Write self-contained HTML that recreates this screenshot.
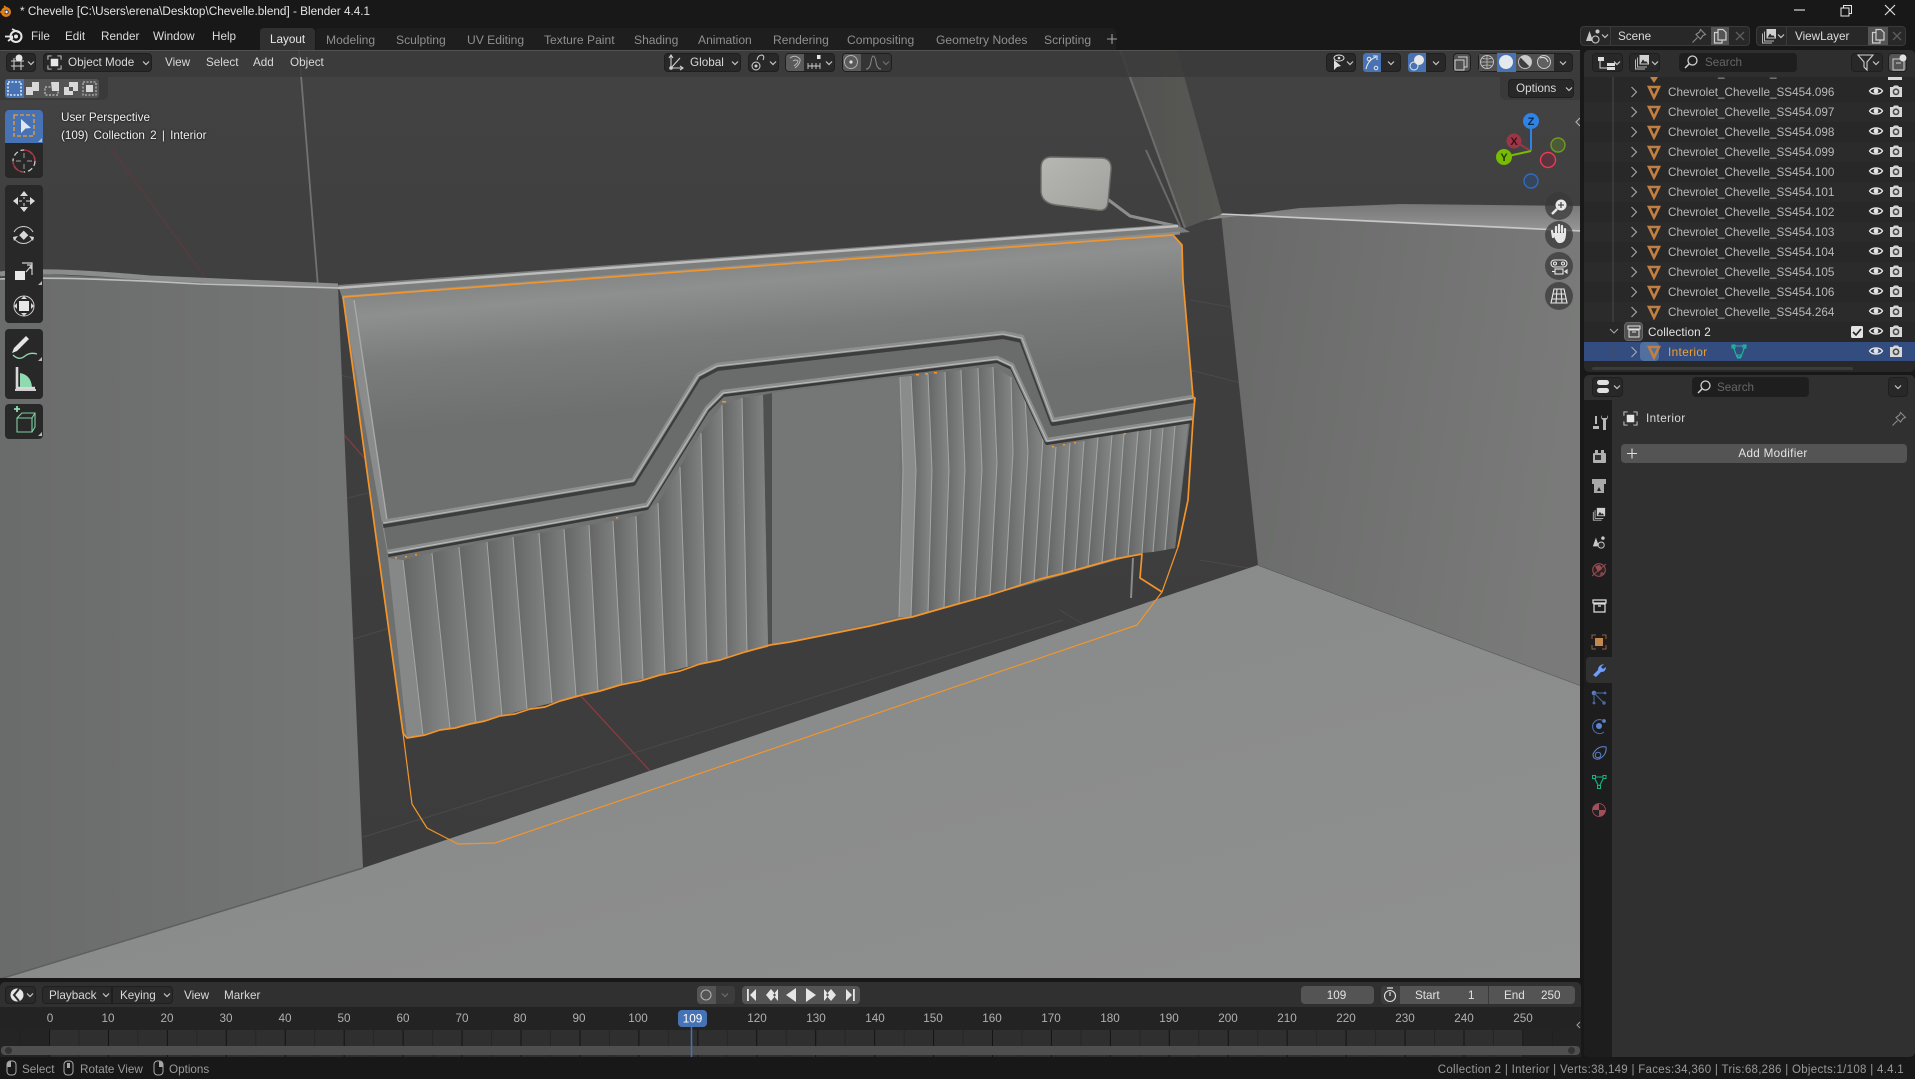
<!DOCTYPE html>
<html><head><meta charset="utf-8"><title>Blender</title>
<style>
html,body{margin:0;padding:0;background:#181818;width:1915px;height:1079px;overflow:hidden}
body{position:relative;font-family:"Liberation Sans",sans-serif;font-size:11.7px;color:#c4c4c4}
.t{position:absolute;line-height:16px;white-space:nowrap;margin-top:1px}
.tab{font-size:12.1px}
.b{position:absolute;box-sizing:border-box}
.btn{position:absolute;box-sizing:border-box;background:#282828;border:1px solid #1f1f1f;border-radius:4px}
svg{position:absolute;left:0;top:0;overflow:visible}
</style></head><body>
<svg width="0" height="0" style="position:absolute">
<defs>
<symbol id="tri" viewBox="0 0 16 16"><path d="M3 3H13L8 13.5Z" fill="none" stroke="#c27f41" stroke-width="2.6"/></symbol>
<symbol id="eye" viewBox="0 0 16 16"><path d="M1.5 8C4 4 12 4 14.500 8C12 12 4 12 1.500 8Z" fill="none" stroke="#e4e4e4" stroke-width="1.400"/><circle cx="8" cy="8" r="2.400" fill="#e4e4e4"/></symbol>
<symbol id="cam" viewBox="0 0 16 16"><path d="M2 4H5L6 2.500H10L11 4H14V14H2Z" fill="#d8d8d8"/><circle cx="8" cy="8.800" r="3.400" fill="#4a4a4a"/><circle cx="8" cy="8.800" r="1.800" fill="#d8d8d8"/></symbol>
<symbol id="chev" viewBox="0 0 8 8"><path d="M1 2.500L4 5.500L7 2.500" fill="none" stroke="#c8c8c8" stroke-width="1.200"/></symbol>
<symbol id="arr" viewBox="0 0 8 12"><path d="M1.500 1L6.500 6L1.500 11" fill="none" stroke="#a8a8a8" stroke-width="1.100"/></symbol>
<symbol id="copy" viewBox="0 0 16 16"><path d="M6 1.500H11L14 4.500V12H6ZM6 4.500H2.500V15H10V12" fill="none" stroke="#cfcfcf" stroke-width="1.200"/></symbol>
<symbol id="x" viewBox="0 0 16 16"><path d="M4 4L12 12M12 4L4 12" stroke="#5e5e5e" stroke-width="1.300"/></symbol>
<symbol id="search" viewBox="0 0 16 16"><circle cx="9.500" cy="6.500" r="4.500" fill="none" stroke="#d0d0d0" stroke-width="1.300"/><path d="M6.200 9.800L2 14" stroke="#d0d0d0" stroke-width="1.500"/></symbol>
<symbol id="pin" viewBox="0 0 16 16"><path d="M9.500 1.500L14.500 6.500L12 7.500L9.500 11L5 6.500L8.500 4ZM6.500 9.500L1.500 14.500" fill="none" stroke="#8a8a8a" stroke-width="1.100"/></symbol>
<symbol id="objbox" viewBox="0 0 16 16"><path d="M1 5V1H5M11 1H15V5M15 11V15H11M5 15H1V11" fill="none" stroke="#d0d0d0" stroke-width="1"/><rect x="4" y="4" width="8" height="8" fill="#e6e6e6"/></symbol>
<symbol id="vl" viewBox="0 0 16 16"><rect x="5.500" y="1" width="9.500" height="9.500" fill="#d0d0d0"/><path d="M6.500 9.500L9 5.500L11 8L12 7L14 9.500Z" fill="#2a2a2a"/><path d="M3.500 3.500V13H13M1.500 5.500V15H11" fill="none" stroke="#b8b8b8" stroke-width="1"/></symbol>
<symbol id="scn" viewBox="0 0 16 16"><path d="M1 13L4.500 3L8 13Z" fill="#c8c8c8"/><circle cx="12.500" cy="3.500" r="2" fill="#c8c8c8"/><circle cx="10.500" cy="11.500" r="3.500" fill="#2a2a2a" stroke="#c8c8c8" stroke-width="1.100"/></symbol>
</defs>
</svg>

<!-- SCENE -->
<svg width="1582" height="979" viewBox="0 0 1582 979" style="left:0;top:0">
<defs>
<linearGradient id="bgG" x1="0" y1="0" x2="0" y2="1"><stop offset="0" stop-color="#434343"/><stop offset=".4" stop-color="#3e3e3e"/><stop offset="1" stop-color="#3c3c3c"/></linearGradient>
<linearGradient id="lw" x1="0" y1="0" x2="1" y2="0"><stop offset="0" stop-color="#6a6b6b"/><stop offset="1" stop-color="#757676"/></linearGradient>
<linearGradient id="rw" x1="0" y1="0" x2="1" y2="0.2"><stop offset="0" stop-color="#686968"/><stop offset="1" stop-color="#797a79"/></linearGradient>
<linearGradient id="fl" x1="0" y1="0" x2="1" y2="1"><stop offset="0" stop-color="#868787"/><stop offset="1" stop-color="#8f9090"/></linearGradient>
<linearGradient id="door" gradientUnits="userSpaceOnUse" x1="700" y1="268" x2="712" y2="405"><stop offset="0" stop-color="#858686"/><stop offset=".14" stop-color="#8e8f8f"/><stop offset=".5" stop-color="#7a7b7b"/><stop offset="1" stop-color="#6e6f6f"/></linearGradient>
<linearGradient id="pl" x1="0" y1="0" x2="1" y2="0"><stop offset="0" stop-color="#646565"/><stop offset=".8" stop-color="#7f8080"/><stop offset="1" stop-color="#848585"/></linearGradient>
<linearGradient id="sill" x1="0" y1="0" x2="0" y2="1"><stop offset="0" stop-color="#777"/><stop offset=".7" stop-color="#8d8d8d"/><stop offset="1" stop-color="#999"/></linearGradient>
<linearGradient id="pillar" x1="0" y1="0" x2="1" y2="0"><stop offset="0" stop-color="#525250"/><stop offset="1" stop-color="#585855"/></linearGradient>
<linearGradient id="mir" x1="0" y1="0" x2="1" y2="1"><stop offset="0" stop-color="#b6b7b3"/><stop offset="1" stop-color="#a0a19c"/></linearGradient>
</defs>
<rect width="1582" height="979" fill="url(#bgG)"/>
<g stroke="#4a4a4a" stroke-width="1" fill="none">
<path d="M363 837L1063 620M340 375L1030 540M1190 370L1580 470M1190 300L1260 312M1200 560L1260 570"/>
<path d="M340 500L380 490M350 640L400 625M1060 610L1150 665"/>
</g>
<path d="M340 430L366 460M581 696L651 772" stroke="#8a3a42" stroke-width="1.300" fill="none"/>
<path d="M110 147L208 281" stroke="#5a3a3e" stroke-width="1.300"/>
<path d="M299 50L318 287" stroke="#727272" stroke-width="1.800"/>
<!-- left wall -->
<polygon points="0,278 40,274 200,282 338,287 363,868 0,979" fill="url(#lw)"/>
<path d="M0 274Q40 268 150 278L338 286" stroke="#8b8c8c" stroke-width="5" fill="none"/>
<path d="M0 279Q60 276 200 284L338 288" stroke="#bdbdbd" stroke-width="1.600" fill="none"/>
<!-- floor -->
<polygon points="0,979 363,868 1258,565 1582,686 1582,979" fill="url(#fl)"/>
<path d="M0 979L363 868" stroke="#5e5e5e" stroke-width="1.500"/>
<path d="M1258 565L1582 686" stroke="#555" stroke-width="1.200"/>
<!-- right wall -->
<polygon points="1221,214 1582,232 1582,686 1258,565" fill="url(#rw)"/>
<polygon points="1190,222 1300,208 1400,204 1582,206 1582,232 1221,215" fill="url(#sill)"/>
<path d="M1205 217L1221 214L1582 231" stroke="#c8c8c8" stroke-width="1.600" fill="none"/>
<!-- pillar -->
<polygon points="1120,50 1177,50 1222,214 1185,228" fill="url(#pillar)"/>
<path d="M1120 50L1185 228" stroke="#6d6d6b" stroke-width="2"/>
<path d="M1146 150L1180 226" stroke="#6a6a68" stroke-width="2"/>
<!-- mirror -->
<path d="M1106 198L1130 216L1176 226" stroke="#8e8e8e" stroke-width="3" fill="none"/>
<path d="M1052 157L1102 158Q1112 159 1111 170L1108 202Q1107 212 1097 210L1056 205Q1042 203 1041 192L1041 168Q1041 157 1052 157Z" fill="url(#mir)" stroke="#6c6d69" stroke-width="1.400"/>
<!-- rail -->
<polygon points="338,285 1176,224 1190,232 344,304" fill="#7c7d7d"/>
<path d="M338 288L1178 226" stroke="#bcbcbc" stroke-width="2.400"/>
<path d="M342 297L1180 233" stroke="#8d8e8e" stroke-width="3"/>
<!-- notch area -->
<path d="M1133 558L1131 598" stroke="#8a8a8a" stroke-width="2" fill="none"/>
<!-- door upper -->
<polygon points="343,297 1173,235 1182,245 1183,280 1193,397 1195,398 1193,420 1188,423 1175,548 1142,553 912,617 772,645 407,738 403,733" fill="url(#door)"/>
<polygon points="343,297 354,300 393,558 388,558" fill="#8a8b8b"/>
<path d="M354 300L393 560" stroke="#a7a8a8" stroke-width="1.400" fill="none"/>
<!-- channel between trims -->
<polygon points="383,522 633,480 698,375 717,365 1003,333 1022,337 1053,420 1193,397 1192,418 1047,440 1012,365 997,358 723,392 707,408 647,505 388,552" fill="#6a6b6b"/>
<!-- lower panel base -->
<polygon points="388,556 647,508 707,410 723,394 997,360 1012,367 1047,443 1190,421 1175,548 1142,553 912,617 772,645 407,738" fill="#717272"/>
<!-- plain panel -->
<polygon points="772,393 900,377 899,617 772,645" fill="#757676"/>
<polygon points="763,395 772,393 772,645 768,647" fill="#4e4f4f"/>
<polygon points="900,377 911,376 916,470 911,617 899,617 903,470" fill="#8a8b8b"/>
<!-- left pleats -->
<polygon points="388,558 403,560 423,735 407,738" fill="#868787"/>
<g fill="url(#pl)">
<polygon points="403,560 432,553 450,728 423,735"/>
<polygon points="432,553 459,547 476,723 450,728"/>
<polygon points="459,547 487,542 502,716 476,723"/>
<polygon points="487,542 513,537 527,709 502,716"/>
<polygon points="513,537 539,533 552,703 527,709"/>
<polygon points="539,533 564,529 576,696 552,703"/>
<polygon points="564,529 589,525 598,691 576,696"/>
<polygon points="589,525 613,521 622,684 598,691"/>
<polygon points="613,521 636,516 643,679 622,684"/>
<polygon points="636,516 658,503 665,673 643,679"/>
<polygon points="658,503 680,467 687,667 665,673"/>
<polygon points="680,467 701,433 707,662 687,667"/>
<polygon points="701,433 722,405 727,658 707,662"/>
<polygon points="722,405 742,398 747,652 727,658"/>
<polygon points="742,398 763,395 768,647 747,652"/>
<polygon points="911,376 928,374 932,470 928,613 911,617 916,470"/>
<polygon points="928,374 945,372 949,470 944,608 928,613 932,470"/>
<polygon points="945,372 961,370 965,470 959,603 944,608 949,470"/>
<polygon points="961,370 978,368 982,470 975,598 959,603 965,470"/>
<polygon points="978,368 993,367 997,463 990,595 975,598 982,470"/>
<polygon points="993,367 1011,377 1013,453 1005,590 990,595 997,463"/>
<polygon points="1011,377 1025,397 1028,453 1020,586 1005,590 1013,453"/>
<polygon points="1025,397 1043,438 1034,582 1020,586 1028,453"/>
<polygon points="1043,438 1056,447 1047,577 1034,582"/>
<polygon points="1056,447 1070,443 1062,574 1047,577"/>
<polygon points="1070,443 1084,441 1075,571 1062,574"/>
<polygon points="1084,441 1098,437 1088,567 1075,571"/>
<polygon points="1098,437 1112,435 1102,563 1088,567"/>
<polygon points="1112,435 1124,433 1115,559 1102,563"/>
<polygon points="1124,433 1138,431 1128,557 1115,559"/>
<polygon points="1138,431 1151,429 1142,553 1128,557"/>
<polygon points="1151,429 1163,428 1153,552 1142,553"/>
<polygon points="1163,428 1175,426 1165,550 1153,552"/>
<polygon points="1175,426 1188,423 1175,548 1165,550"/>
</g>
<g stroke="#a4a5a5" stroke-width="1" fill="none">
<path d="M403 560L423 735M432 553L450 728M459 547L476 723M487 542L502 716M513 537L527 709M539 533L552 703M564 529L576 696M589 525L598 691M613 521L622 684M636 516L643 679M658 503L665 673M680 467L687 667M701 433L707 662M722 405L727 658M742 398L747 652"/>
<path d="M900 377L903 470L899 617M911 376L916 470L911 617M928 374L932 470L928 613M945 372L949 470L944 608M961 370L965 470L959 603M978 368L982 470L975 598M993 367L997 463L990 595M1011 377L1013 453L1005 590M1025 397L1028 453L1020 586M1043 438L1034 582"/>
<path d="M1056 447L1047 577M1070 443L1062 574M1084 441L1075 571M1098 437L1088 567M1112 435L1102 563M1124 433L1115 559M1138 431L1128 557M1151 429L1142 553M1163 428L1153 552M1175 426L1165 550"/>
</g>
<!-- trims -->
<g fill="none" stroke-linejoin="round">
<path d="M383 525L633 483L698 378L717 368L1003 336L1022 340L1053 423L1193 400" stroke="#3d3d3d" stroke-width="6"/>
<path d="M383 522L633 480L698 375L717 365L1003 333L1022 337L1053 420L1193 397" stroke="#8c8d8d" stroke-width="4.500"/>
<path d="M383 523L633 481L698 376L717 366L1003 334L1022 338L1053 421L1193 398" stroke="#b8b9b9" stroke-width="1"/>
<path d="M388 555L647 508L707 411L723 395L997 361L1012 368L1047 443L1192 421" stroke="#383838" stroke-width="4"/>
<path d="M388 552L647 505L707 408L723 392L997 358L1012 365L1047 440L1192 418" stroke="#8c8d8d" stroke-width="4.500"/>
<path d="M388 553L647 506L707 409L723 393L997 359L1012 366L1047 441L1192 419" stroke="#bdbebe" stroke-width="1"/>
</g>
<!-- orange outline -->
<g fill="none" stroke="#f3952a" stroke-linejoin="round">
<path d="M343 297L1173 235L1182 245L1183 280L1193 397L1195 398L1193 420L1188 500L1178 547" stroke-width="1.700"/>
<path d="M343 297L403 733L407 738L425 735L440 730L455 728L470 724L485 721L500 716L515 714L530 709L545 707L560 701L582 695L600 691L620 685L640 681L660 675L680 671L700 664L720 660L745 652L770 645L790 642L810 638L840 632L870 626L900 619L912 617L940 609L965 602L990 595L1015 587L1040 579L1065 573L1090 566L1115 559L1142 554L1140 578L1162 592" stroke-width="1.700"/>
<path d="M1178 547L1162 592L1137 625L495 843L458 844L427 828L412 804L403 733" stroke-width="1.200"/>
</g>
<g fill="#f3952a"><rect x="395" y="557" width="2" height="1.500"/><rect x="405" y="556" width="2" height="1.500"/><rect x="415" y="554" width="2" height="1.500"/><rect x="616" y="517" width="2" height="1.500"/><rect x="722" y="401" width="4" height="1.500"/><rect x="916" y="374" width="3" height="1.500"/><rect x="925" y="373" width="3" height="1.500"/><rect x="934" y="372" width="3" height="1.500"/><rect x="1052" y="446" width="2" height="1.500"/><rect x="1063" y="444" width="2" height="1.500"/><rect x="1074" y="442" width="2" height="1.500"/><rect x="1124" y="433" width="2" height="1.500"/></g>
<!-- gizmo -->
<path d="M1531 151V121" stroke="#2f83e6" stroke-width="2"/>
<path d="M1531 151L1514 141" stroke="#9c3647" stroke-width="2"/>
<path d="M1531 151L1504 157" stroke="#78bb00" stroke-width="2"/>
<circle cx="1558" cy="145" r="7" fill="#4c5a35" stroke="#6f9a22" stroke-width="1.400"/>
<circle cx="1548" cy="160" r="7.500" fill="#59333d" stroke="#ed3a55" stroke-width="1.400"/>
<circle cx="1531" cy="181" r="7" fill="#35465f" stroke="#2f6cc0" stroke-width="1.400"/>
<circle cx="1514" cy="141" r="7.500" fill="#9c3647"/>
<circle cx="1531" cy="121" r="8" fill="#2f83e6"/>
<circle cx="1504" cy="157" r="8" fill="#78bb00"/>
<text x="1531" y="125" font-family="Liberation Sans" font-size="11" font-weight="bold" fill="#0e2a4a" text-anchor="middle">Z</text>
<text x="1514" y="145" font-family="Liberation Sans" font-size="11" font-weight="bold" fill="#3d0f18" text-anchor="middle">X</text>
<text x="1504" y="161" font-family="Liberation Sans" font-size="11" font-weight="bold" fill="#22380a" text-anchor="middle">Y</text>
<!-- nav -->
<g fill="#3a3a3a" fill-opacity=".75"><circle cx="1559" cy="206" r="14"/><circle cx="1559" cy="235" r="14"/><circle cx="1559" cy="266" r="14"/><circle cx="1559" cy="296" r="14"/></g>
<circle cx="1561" cy="205" r="5.500" fill="#e8e8e8"/><path d="M1557 209L1552 214" stroke="#e8e8e8" stroke-width="2.500"/><path d="M1558 205H1564M1561 202V208" stroke="#333" stroke-width="1.100"/>
<path d="M1553 237L1552 231M1556 233V227M1559 232V225M1562 232V226M1565 234V229" stroke="#e8e8e8" stroke-width="2.200" stroke-linecap="round"/><path d="M1553 233Q1556 244 1560 243Q1566 243 1566 233L1553 233Z" fill="#e8e8e8"/>
<g fill="none" stroke="#e8e8e8" stroke-width="1.100"><rect x="1551" y="260" width="16" height="7" rx="3.500"/><circle cx="1555" cy="263.500" r="1.500"/><circle cx="1563" cy="263.500" r="1.500"/><rect x="1555" y="269" width="8" height="5"/><path d="M1565 271.500L1567 270V273Z"/><path d="M1552 271.500H1555"/></g>
<g fill="none" stroke="#e8e8e8" stroke-width="1.100"><path d="M1554 289H1564L1567 303H1551ZM1552.500 294H1565.500M1552 299H1566M1557 289L1556 303M1561 289L1562 303"/></g>
<path d="M1580 118L1576 122L1580 126" stroke="#b0b0b0" stroke-width="1.200" fill="none"/>
</svg>

<!-- viewport header shade -->
<div class="b" style="left:0;top:50px;width:1580px;height:27px;background:#3a3a3a;opacity:.85;border-top:1px solid #555"></div>
<div class="b" style="left:0;top:77px;width:108px;height:23px;background:#3a3a3a;border-radius:0 0 5px 0;opacity:.9"></div>
<div class="b" style="left:1500px;top:77px;width:80px;height:23px;background:#3a3a3a;border-radius:0 0 0 5px;opacity:.9"></div>
<div class="b" style="left:1580px;top:50px;width:4px;height:932px;background:#181818"></div>
<div class="b" style="left:0;top:978px;width:1584px;height:4px;background:#181818"></div>

<!-- Top bars -->
<div class="b" style="left:0;top:0;width:1915px;height:50px;background:#181818"></div>
<svg width="14" height="14" viewBox="0 0 14 14" style="left:0;top:4px"><circle cx="6" cy="8" r="5" fill="#e87d0d"/><circle cx="6.500" cy="8" r="2.400" fill="#265787"/><circle cx="6.500" cy="8" r="1.200" fill="#fff"/><path d="M0 8H6M4 2L9 6" stroke="#e87d0d" stroke-width="1.600"/></svg>
<div class="t" style="left:20px;top:3px;font-size:11.75px;color:#e4e4e4">* Chevelle [C:\Users\erena\Desktop\Chevelle.blend] - Blender 4.4.1</div>
<svg width="1915" height="20" viewBox="0 0 1915 20" style="left:0;top:0"><path d="M1794 10H1805" stroke="#e8e8e8" stroke-width="1.100"/><path d="M1841 8H1849V16H1841ZM1843.500 8V5.500H1851.500V13.500H1849" fill="none" stroke="#e8e8e8" stroke-width="1"/><path d="M1885 5L1895 15M1895 5L1885 15" stroke="#e8e8e8" stroke-width="1.100"/></svg>
<svg width="20" height="20" viewBox="0 0 20 20" style="left:5px;top:26px"><circle cx="11" cy="10.500" r="5.500" fill="none" stroke="#e6e6e6" stroke-width="2"/><circle cx="11" cy="10.500" r="2" fill="#e6e6e6"/><path d="M0 10.500H8M3 15L8 11.500M7 3L14 6.500" stroke="#e6e6e6" stroke-width="1.800"/></svg>
<div class="t" style="left:31px;top:28px;color:#dcdcdc">File</div>
<div class="t" style="left:65px;top:28px;color:#dcdcdc">Edit</div>
<div class="t" style="left:101px;top:28px;color:#dcdcdc">Render</div>
<div class="t" style="left:153px;top:28px;color:#dcdcdc">Window</div>
<div class="t" style="left:212px;top:28px;color:#dcdcdc">Help</div>
<!-- tabs -->
<div class="b" style="left:260px;top:28px;width:55px;height:22px;background:#303030;border-radius:4px 4px 0 0"></div>
<div class="b" style="left:316px;top:28px;width:800px;height:22px;background:#1e1e1e;border-radius:4px 4px 0 0"></div>
<div class="t" style="left:270px;top:31px;color:#e8e8e8">Layout</div>
<div class="t tab" style="left:326px;top:31px;color:#8f8f8f">Modeling</div>
<div class="t tab" style="left:396px;top:31px;color:#8f8f8f">Sculpting</div>
<div class="t tab" style="left:467px;top:31px;color:#8f8f8f">UV Editing</div>
<div class="t tab" style="left:544px;top:31px;color:#8f8f8f">Texture Paint</div>
<div class="t tab" style="left:634px;top:31px;color:#8f8f8f">Shading</div>
<div class="t tab" style="left:698px;top:31px;color:#8f8f8f">Animation</div>
<div class="t tab" style="left:773px;top:31px;color:#8f8f8f">Rendering</div>
<div class="t tab" style="left:847px;top:31px;color:#8f8f8f">Compositing</div>
<div class="t tab" style="left:936px;top:31px;color:#8f8f8f">Geometry Nodes</div>
<div class="t tab" style="left:1044px;top:31px;color:#8f8f8f">Scripting</div>
<svg width="12" height="12" viewBox="0 0 12 12" style="left:1106px;top:33px"><path d="M6 1V11M1 6H11" stroke="#a0a0a0" stroke-width="1.100"/></svg>
<!-- scene / viewlayer -->
<div class="btn" style="left:1580px;top:26px;width:170px;height:20px;background:#282828;border-color:#3a3a3a"></div>
<div class="b" style="left:1610px;top:27px;width:1px;height:18px;background:#3a3a3a"></div>
<div class="b" style="left:1711px;top:27px;width:18px;height:18px;background:#545454"></div>
<div class="t" style="left:1618px;top:28px;color:#dcdcdc">Scene</div>
<div class="btn" style="left:1756px;top:26px;width:150px;height:20px;background:#282828;border-color:#3a3a3a"></div>
<div class="b" style="left:1786px;top:27px;width:1px;height:18px;background:#3a3a3a"></div>
<div class="b" style="left:1868px;top:27px;width:20px;height:18px;background:#545454"></div>
<div class="t" style="left:1795px;top:28px;color:#dcdcdc">ViewLayer</div>
<svg width="1915" height="50" viewBox="0 0 1915 50" style="left:0;top:0">
<use href="#scn" x="1585" y="28" width="16" height="16"/><use href="#chev" x="1601" y="32" width="8" height="8"/>
<use href="#pin" x="1691" y="28" width="16" height="16"/><use href="#copy" x="1712" y="28" width="16" height="16"/><use href="#x" x="1732" y="28" width="16" height="16"/>
<use href="#vl" x="1761" y="28" width="16" height="16"/><use href="#chev" x="1777" y="32" width="8" height="8"/>
<use href="#copy" x="1870" y="28" width="16" height="16"/><use href="#x" x="1889" y="28" width="16" height="16"/>
</svg>

<!-- Viewport header widgets -->
<div class="btn" style="left:6px;top:53px;width:30px;height:19px"></div>
<div class="btn" style="left:43px;top:53px;width:109px;height:19px"></div>
<div class="t" style="left:68px;top:54px;color:#d8d8d8">Object Mode</div>
<div class="t" style="left:165px;top:54px;color:#d8d8d8">View</div>
<div class="t" style="left:206px;top:54px;color:#d8d8d8">Select</div>
<div class="t" style="left:253px;top:54px;color:#d8d8d8">Add</div>
<div class="t" style="left:290px;top:54px;color:#d8d8d8">Object</div>
<div class="btn" style="left:664px;top:53px;width:77px;height:19px"></div>
<div class="t" style="left:690px;top:54px;color:#d8d8d8">Global</div>
<div class="btn" style="left:748px;top:53px;width:31px;height:19px"></div>
<div class="btn" style="left:785px;top:53px;width:50px;height:19px"></div>
<div class="b" style="left:786px;top:54px;width:18px;height:17px;background:#5a5a5a;border-radius:3px 0 0 3px"></div>
<div class="btn" style="left:842px;top:53px;width:50px;height:19px;background:#343434"></div>
<div class="b" style="left:843px;top:54px;width:18px;height:17px;background:#5a5a5a;border-radius:3px 0 0 3px"></div>
<div class="btn" style="left:1326px;top:53px;width:30px;height:19px"></div>
<div class="btn" style="left:1363px;top:53px;width:38px;height:19px"></div>
<div class="b" style="left:1363px;top:53px;width:18px;height:19px;background:#4772b3;border-radius:3px 0 0 3px"></div>
<div class="btn" style="left:1408px;top:53px;width:38px;height:19px"></div>
<div class="b" style="left:1408px;top:53px;width:18px;height:19px;background:#4772b3;border-radius:3px 0 0 3px"></div>
<div class="btn" style="left:1453px;top:53px;width:18px;height:19px;background:#505050"></div>
<div class="btn" style="left:1478px;top:53px;width:95px;height:19px"></div>
<div class="b" style="left:1479px;top:54px;width:18px;height:17px;background:#505050"></div>
<div class="b" style="left:1497px;top:53px;width:19px;height:19px;background:#4772b3"></div>
<div class="b" style="left:1516px;top:54px;width:38px;height:17px;background:#505050"></div>
<div class="btn" style="left:1508px;top:79px;width:66px;height:19px"></div>
<div class="t" style="left:1516px;top:80px;color:#d8d8d8">Options</div>
<svg width="1915" height="110" viewBox="0 0 1915 110" style="left:0;top:0">
<path d="M11 61H24M11 66H24M14 58V70M21 58V70" stroke="#d0d0d0" stroke-width="1" fill="none"/><circle cx="19" cy="58" r="3.500" fill="#e4e4e4"/>
<use href="#chev" x="27" y="59" width="8" height="8"/>
<use href="#objbox" x="47" y="55" width="15" height="15"/><use href="#chev" x="142" y="59" width="8" height="8"/>
<path d="M671 56V68H682M671 68L680 58M669 58L671 55L673 58M680 66L683 68L680 70" stroke="#d0d0d0" stroke-width="1.100" fill="none"/><circle cx="671" cy="68" r="1.800" fill="#d0d0d0"/>
<use href="#chev" x="731" y="59" width="8" height="8"/>
<circle cx="756" cy="66" r="4" fill="none" stroke="#d0d0d0"/><circle cx="756" cy="66" r="1.500" fill="#d0d0d0"/><path d="M757 60Q758 55 762 55Q765 56 763 60" fill="none" stroke="#d0d0d0"/>
<use href="#chev" x="769" y="59" width="8" height="8"/>
<path d="M790 58Q795 54 800 59Q801 63 795 68M793 61Q796 59 798 61Q798 63 794 66" fill="none" stroke="#b8b8b8" stroke-width="1"/>
<path d="M808 66H820M808 63V69M812 63V69M816 63V69M820 63V69" stroke="#d0d0d0" stroke-width=".9"/><rect x="817" y="55" width="3.500" height="4" fill="#e8e8e8"/>
<use href="#chev" x="825" y="59" width="8" height="8"/>
<circle cx="851" cy="62" r="6.500" fill="none" stroke="#b0b0b0"/><circle cx="851" cy="62" r="1.600" fill="#e0e0e0"/>
<path d="M866 69Q870 69 871 62Q872 56 873 56Q875 56 876 62Q877 69 881 69" fill="none" stroke="#888" stroke-width="1"/>
<use href="#chev" x="882" y="59" width="8" height="8" opacity=".4"/>
<path d="M1334 60L1334 70L1337 67L1341 66Z" fill="#e0e0e0"/><ellipse cx="1339" cy="58" rx="5" ry="3" fill="none" stroke="#e0e0e0"/><circle cx="1339" cy="58" r="1.300" fill="#e0e0e0"/><use href="#chev" x="1346" y="59" width="8" height="8"/>
<path d="M1366 69Q1368 60 1376 57M1373 56H1377V60" fill="none" stroke="#e6e6e6" stroke-width="1.100"/><circle cx="1369" cy="59" r="1.800" fill="none" stroke="#e6e6e6"/><circle cx="1376" cy="68" r="1.800" fill="none" stroke="#e6e6e6"/><use href="#chev" x="1387" y="59" width="8" height="8"/>
<circle cx="1419" cy="60" r="5" fill="#e8e8e8"/><circle cx="1414" cy="66" r="4" fill="none" stroke="#e8e8e8"/><use href="#chev" x="1432" y="59" width="8" height="8"/>
<path d="M1458 57H1467V67H1464M1455 60H1464V70H1455Z" fill="none" stroke="#d0d0d0"/>
<circle cx="1487" cy="62" r="6.500" fill="none" stroke="#c0c0c0"/><path d="M1480.500 62H1493.500M1487 55.500V68.500M1482 58Q1487 60 1492 58M1482 66Q1487 64 1492 66" fill="none" stroke="#c0c0c0" stroke-width=".8"/>
<circle cx="1506" cy="62" r="7" fill="#e4e8ef"/>
<circle cx="1525" cy="62" r="6.500" fill="#3e3e3e" stroke="#c0c0c0"/><path d="M1525 55.500A6.500 6.500 0 0 1 1525 68.500Z" fill="#cacaca" transform="rotate(-45 1525 62)"/>
<circle cx="1544" cy="62" r="6.500" fill="#606060" stroke="#c8c8c8"/><path d="M1540 58Q1546 56 1548 62" stroke="#e0e0e0" fill="none"/>
<use href="#chev" x="1559" y="59" width="8" height="8"/>
<use href="#chev" x="1565" y="85" width="8" height="8"/>
</svg>
<!-- select mode -->
<div class="b" style="left:5px;top:79px;width:94px;height:19px;background:#545454;border-radius:3px"></div>
<div class="b" style="left:5px;top:79px;width:19px;height:19px;background:#4772b3;border-radius:3px 0 0 3px"></div>
<svg width="110" height="100" viewBox="0 0 110 100" style="left:0;top:0">
<rect x="8" y="82" width="13" height="13" fill="none" stroke="#fff" stroke-width="1.300" stroke-dasharray="2 1.500"/>
<path d="M26 87H32V82H39V91H33V95H26Z" fill="#d8d8d8"/>
<path d="M51 82H59V91H52Z" fill="#d8d8d8"/><rect x="45" y="87" width="13" height="8" fill="none" stroke="#ddd" stroke-dasharray="2 1.500"/>
<path d="M64 87H69V82H78V91H73V95H64ZM69 87V91H73V87Z" fill="#d8d8d8" fill-rule="evenodd"/>
<rect x="83" y="82" width="13" height="13" fill="none" stroke="#ccc" stroke-dasharray="2 1.500"/><rect x="86" y="85" width="7" height="7" fill="#d8d8d8"/>
</svg>
<!-- overlay text -->
<div class="t" style="left:61px;top:109px;color:#f0f0f0;text-shadow:0 0 2px #000">User Perspective</div>
<div class="t" style="left:61px;top:127px;color:#f0f0f0;text-shadow:0 0 2px #000;word-spacing:2px">(109) Collection 2 | Interior</div>
<!-- toolbar -->
<div class="b" style="left:5px;top:110px;width:38px;height:68px;background:#282828;border-radius:4px"></div>
<div class="b" style="left:5px;top:110px;width:38px;height:33px;background:#4772b3;border-radius:4px 4px 0 0"></div>
<div class="b" style="left:5px;top:185px;width:38px;height:138px;background:#282828;border-radius:4px"></div>
<div class="b" style="left:5px;top:329px;width:38px;height:70px;background:#282828;border-radius:4px"></div>
<div class="b" style="left:5px;top:404px;width:38px;height:35px;background:#282828;border-radius:4px"></div>
<svg width="50" height="450" viewBox="0 0 50 450" style="left:0;top:0">
<rect x="14" y="115" width="20" height="21" fill="none" stroke="#f0a030" stroke-width="1.300" stroke-dasharray="4 2"/>
<path d="M21 119L31 128L25.500 128.500L21 133Z" fill="#dfe6f2"/>
<circle cx="24" cy="161" r="11" fill="none" stroke="#d0d0d0" stroke-width="1.300" stroke-dasharray="5 3"/><path d="M24 150A11 11 0 0 1 35 161" fill="none" stroke="#b03040" stroke-width="1.300"/><path d="M24 172A11 11 0 0 1 13 161" fill="none" stroke="#b03040" stroke-width="1.300"/>
<path d="M16 161H21M27 161H32M24 153V158M24 164V169" stroke="#888" stroke-width="1.200"/>
<path d="M24 191L20 196H28ZM24 212L20 207H28ZM13 201L18 197V205ZM35 201L30 197V205Z" fill="#dcdcdc"/><path d="M24 197V199M24 203V206M19 201H22M26 201H30" stroke="#dcdcdc"/>
<rect x="20.500" y="232" width="6.500" height="6.500" transform="rotate(45 23.750 235.250)" fill="#d8d8d8"/><path d="M14 232A11 11 0 0 1 33 232M14 238A11 11 0 0 0 33 238" fill="none" stroke="#d0d0d0"/><path d="M13 237L18 236L14 241ZM34 237L29 236L33 241Z" fill="#d8d8d8"/>
<rect x="15" y="271" width="10" height="9" fill="#e8e8e8"/><path d="M22 263H32V275M26 272L31 266M27 265H31V269" fill="none" stroke="#d0d0d0" stroke-width="1.200"/>
<circle cx="24" cy="306" r="10" fill="none" stroke="#d0d0d0"/><rect x="19" y="301" width="10" height="10" fill="#e8e8e8"/><path d="M24 296L21 299H27ZM24 316L21 313H27ZM14 306L17 303V309ZM34 306L31 303V309Z" fill="#d8d8d8"/>
<path d="M14 348L26 336L29 339L17 351ZM12 353L14 348L17 351Z" fill="#e6e6e6"/><path d="M13 355Q19 361 25 356Q30 352 37 354" fill="none" stroke="#8fdab0" stroke-width="1.300"/>
<path d="M17 367V388H35" fill="none" stroke="#d8d8d8" stroke-width="2.600"/><path d="M20 373Q31 375 32 387H20Z" fill="#8fdab0"/><path d="M15 389H36V391H15Z" fill="#d0d0d0"/>
<path d="M17 418H32V432H17ZM17 418L22 413H35V427L32 432M32 418L35 413" fill="none" stroke="#7ecfa4" stroke-width="1.100"/><path d="M14 409H20M17 406V412" stroke="#8fdab0" stroke-width="1.800"/>
<path d="M42 142V138L38 142ZM42 285V281L38 285ZM42 361V357L38 361ZM42 436V432L38 436Z" fill="#b8b8b8"/>
</svg>

<!-- Outliner -->
<div class="b" style="left:1584px;top:50px;width:331px;height:322px;background:#282828;border-radius:5px"></div>
<div class="b" style="left:1584px;top:50px;width:331px;height:27px;background:#2e2e2e;border-radius:5px 5px 0 0"></div>
<div class="b" style="left:1584px;top:102px;width:331px;height:20px;background:#2b2b2b"></div>
<div class="b" style="left:1584px;top:142px;width:331px;height:20px;background:#2b2b2b"></div>
<div class="b" style="left:1584px;top:182px;width:331px;height:20px;background:#2b2b2b"></div>
<div class="b" style="left:1584px;top:222px;width:331px;height:20px;background:#2b2b2b"></div>
<div class="b" style="left:1584px;top:262px;width:331px;height:20px;background:#2b2b2b"></div>
<div class="b" style="left:1584px;top:302px;width:331px;height:20px;background:#2b2b2b"></div>
<div class="b" style="left:1584px;top:342px;width:331px;height:19px;background:#334d80"></div>
<div class="b" style="left:1592px;top:367px;width:261px;height:3px;background:#3c3c3c;border-radius:2px"></div>
<div class="btn" style="left:1592px;top:53px;width:31px;height:19px"></div>
<div class="btn" style="left:1629px;top:53px;width:31px;height:19px"></div>
<div class="btn" style="left:1679px;top:53px;width:118px;height:19px;background:#1e1e1e"></div>
<div class="btn" style="left:1851px;top:53px;width:32px;height:19px"></div>
<div class="btn" style="left:1888px;top:53px;width:19px;height:19px;background:#545454"></div>
<div class="t" style="left:1705px;top:54px;color:#666">Search</div>
<div class="b" style="left:1640px;top:342px;width:19px;height:19px;background:#51709f;border-radius:4px"></div>
<div class="b" style="left:1624px;top:322px;width:19px;height:19px;background:#505050;border:1px solid #666;border-radius:4px"></div>
<div class="b" style="left:1668px;top:77px;width:170px;height:6px;overflow:hidden"><div class="t" style="left:0;top:-13px;color:#b8b8b8">Chevrolet_Chevelle_SS454.095</div></div>
<div class="t" style="left:1668px;top:84px;color:#b8b8b8">Chevrolet_Chevelle_SS454.096</div>
<div class="t" style="left:1668px;top:104px;color:#b8b8b8">Chevrolet_Chevelle_SS454.097</div>
<div class="t" style="left:1668px;top:124px;color:#b8b8b8">Chevrolet_Chevelle_SS454.098</div>
<div class="t" style="left:1668px;top:144px;color:#b8b8b8">Chevrolet_Chevelle_SS454.099</div>
<div class="t" style="left:1668px;top:164px;color:#b8b8b8">Chevrolet_Chevelle_SS454.100</div>
<div class="t" style="left:1668px;top:184px;color:#b8b8b8">Chevrolet_Chevelle_SS454.101</div>
<div class="t" style="left:1668px;top:204px;color:#b8b8b8">Chevrolet_Chevelle_SS454.102</div>
<div class="t" style="left:1668px;top:224px;color:#b8b8b8">Chevrolet_Chevelle_SS454.103</div>
<div class="t" style="left:1668px;top:244px;color:#b8b8b8">Chevrolet_Chevelle_SS454.104</div>
<div class="t" style="left:1668px;top:264px;color:#b8b8b8">Chevrolet_Chevelle_SS454.105</div>
<div class="t" style="left:1668px;top:284px;color:#b8b8b8">Chevrolet_Chevelle_SS454.106</div>
<div class="t" style="left:1668px;top:304px;color:#b8b8b8">Chevrolet_Chevelle_SS454.264</div>
<div class="t" style="left:1648px;top:324px;color:#e4e4e4;letter-spacing:.15px">Collection 2</div>
<div class="t" style="left:1668px;top:344px;color:#f0a030;letter-spacing:.4px">Interior</div>
<svg width="1915" height="372" viewBox="0 0 1915 372" style="left:0;top:0">
<path d="M1613 77V322M1613 344V360" stroke="#4a4a4a"/>
<g fill="#ddd"><path d="M1598 57H1604V61H1598ZM1607 63H1615V66H1607ZM1607 67H1615V70H1607Z"/><path d="M1600 61V68H1607" stroke="#ddd" fill="none"/></g>
<use href="#chev" x="1613" y="59" width="8" height="8"/>
<use href="#vl" x="1634" y="54" width="16" height="16"/><use href="#chev" x="1651" y="59" width="8" height="8"/>
<use href="#search" x="1683" y="54" width="16" height="16"/>
<path d="M1858 55H1873L1867 62V70L1864 67V62Z" fill="none" stroke="#d0d0d0" stroke-width="1.100"/><use href="#chev" x="1872" y="59" width="8" height="8"/>
<rect x="1893" y="59" width="11" height="11" fill="none" stroke="#ccc"/><path d="M1896 63H1901" stroke="#ccc"/><circle cx="1903" cy="58" r="3.500" fill="#e0e0e0"/>
<path d="M1650 77H1658L1654 83Z" fill="#c27f41"/><rect x="1888" y="77" width="14" height="3" fill="#d8d8d8"/>
<g transform="translate(1 0)">
<use href="#tri" x="1645" y="84" width="16" height="16"/>
<use href="#tri" x="1645" y="104" width="16" height="16"/>
<use href="#tri" x="1645" y="124" width="16" height="16"/>
<use href="#tri" x="1645" y="144" width="16" height="16"/>
<use href="#tri" x="1645" y="164" width="16" height="16"/>
<use href="#tri" x="1645" y="184" width="16" height="16"/>
<use href="#tri" x="1645" y="204" width="16" height="16"/>
<use href="#tri" x="1645" y="224" width="16" height="16"/>
<use href="#tri" x="1645" y="244" width="16" height="16"/>
<use href="#tri" x="1645" y="264" width="16" height="16"/>
<use href="#tri" x="1645" y="284" width="16" height="16"/>
<use href="#tri" x="1645" y="304" width="16" height="16"/>
<use href="#tri" x="1645" y="344" width="16" height="16"/>
</g>
<g>
<use href="#arr" x="1630" y="86" width="8" height="12"/><use href="#eye" x="1868" y="83" width="16" height="16"/><use href="#cam" x="1888" y="83" width="16" height="16"/>
<use href="#arr" x="1630" y="106" width="8" height="12"/><use href="#eye" x="1868" y="103" width="16" height="16"/><use href="#cam" x="1888" y="103" width="16" height="16"/>
<use href="#arr" x="1630" y="126" width="8" height="12"/><use href="#eye" x="1868" y="123" width="16" height="16"/><use href="#cam" x="1888" y="123" width="16" height="16"/>
<use href="#arr" x="1630" y="146" width="8" height="12"/><use href="#eye" x="1868" y="143" width="16" height="16"/><use href="#cam" x="1888" y="143" width="16" height="16"/>
<use href="#arr" x="1630" y="166" width="8" height="12"/><use href="#eye" x="1868" y="163" width="16" height="16"/><use href="#cam" x="1888" y="163" width="16" height="16"/>
<use href="#arr" x="1630" y="186" width="8" height="12"/><use href="#eye" x="1868" y="183" width="16" height="16"/><use href="#cam" x="1888" y="183" width="16" height="16"/>
<use href="#arr" x="1630" y="206" width="8" height="12"/><use href="#eye" x="1868" y="203" width="16" height="16"/><use href="#cam" x="1888" y="203" width="16" height="16"/>
<use href="#arr" x="1630" y="226" width="8" height="12"/><use href="#eye" x="1868" y="223" width="16" height="16"/><use href="#cam" x="1888" y="223" width="16" height="16"/>
<use href="#arr" x="1630" y="246" width="8" height="12"/><use href="#eye" x="1868" y="243" width="16" height="16"/><use href="#cam" x="1888" y="243" width="16" height="16"/>
<use href="#arr" x="1630" y="266" width="8" height="12"/><use href="#eye" x="1868" y="263" width="16" height="16"/><use href="#cam" x="1888" y="263" width="16" height="16"/>
<use href="#arr" x="1630" y="286" width="8" height="12"/><use href="#eye" x="1868" y="283" width="16" height="16"/><use href="#cam" x="1888" y="283" width="16" height="16"/>
<use href="#arr" x="1630" y="306" width="8" height="12"/><use href="#eye" x="1868" y="303" width="16" height="16"/><use href="#cam" x="1888" y="303" width="16" height="16"/>
</g>
<path d="M1610 329L1614 333L1618 329" fill="none" stroke="#a8a8a8" stroke-width="1.100"/>
<path d="M1628 326H1640V329H1628ZM1629 330H1639V337H1629ZM1632 332H1636" fill="none" stroke="#e0e0e0" stroke-width="1"/>
<rect x="1851" y="326" width="12" height="12" rx="1.500" fill="#e4e4e4"/><path d="M1853 332L1856 335L1861 329" fill="none" stroke="#222" stroke-width="1.600"/>
<use href="#eye" x="1868" y="323" width="16" height="16"/><use href="#cam" x="1888" y="323" width="16" height="16"/>
<use href="#arr" x="1630" y="346" width="8" height="12"/>
<path d="M1733 346H1745L1741 357H1737Z" fill="none" stroke="#1fb79a" stroke-width="1.100"/><g fill="none" stroke="#1fb79a"><rect x="1732" y="345" width="3" height="3"/><rect x="1743" y="345" width="3" height="3"/><rect x="1737.500" y="355" width="3" height="3"/></g>
<use href="#eye" x="1868" y="343" width="16" height="16"/><use href="#cam" x="1888" y="343" width="16" height="16"/>
</svg>

<!-- Properties -->
<div class="b" style="left:1584px;top:375px;width:331px;height:682px;background:#303030;border-radius:5px"></div>
<div class="b" style="left:1584px;top:400px;width:28px;height:657px;background:#1d1d1d;border-radius:0 0 0 5px"></div>
<div class="b" style="left:1586px;top:657px;width:26px;height:26px;background:#303030;border-radius:4px 0 0 4px"></div>
<div class="btn" style="left:1592px;top:377px;width:31px;height:20px"></div>
<div class="btn" style="left:1692px;top:377px;width:117px;height:20px;background:#1e1e1e"></div>
<div class="btn" style="left:1888px;top:377px;width:20px;height:20px"></div>
<div class="t" style="left:1717px;top:379px;color:#666">Search</div>
<div class="t" style="left:1646px;top:410px;color:#d8d8d8;letter-spacing:.4px">Interior</div>
<div class="b" style="left:1621px;top:444px;width:286px;height:19px;background:#545454;border-radius:4px"></div>
<div class="t" style="left:1621px;top:445px;width:304px;text-align:center;color:#e4e4e4;letter-spacing:.3px">Add Modifier</div>
<svg width="1915" height="830" viewBox="0 0 1915 830" style="left:0;top:0">
<rect x="1597" y="380" width="12" height="5" rx="2.500" fill="#e0e0e0"/><rect x="1597" y="388" width="12" height="5" rx="2.500" fill="#e0e0e0"/>
<use href="#chev" x="1613" y="383" width="8" height="8"/><use href="#search" x="1696" y="379" width="16" height="16"/><use href="#chev" x="1894" y="383" width="8" height="8"/>
<use href="#objbox" x="1623" y="411" width="15" height="15"/><use href="#pin" x="1891" y="411" width="16" height="16"/>
<path d="M1627 453.500H1637M1632 448.500V458.500" stroke="#e0e0e0" stroke-width="1.100"/>
<g fill="#b8b8b8"><path d="M1595 416V424H1597V416ZM1593 426H1599V429H1593ZM1602 415Q1600 418 1603 420V430H1606V420Q1609 418 1607 415V418H1602Z"/></g>
<rect x="1593" y="453" width="13" height="10" rx="1" fill="#b0b0b0"/><rect x="1595" y="450" width="3" height="3" fill="#b0b0b0"/><rect x="1601" y="450" width="3" height="3" fill="#b0b0b0"/><rect x="1595" y="455" width="6" height="5" fill="#333"/>
<path d="M1592 479H1606V484H1592ZM1594 484H1604V493H1594Z" fill="#a8a8a8"/><path d="M1597 491L1599 487L1601 491Z" fill="#222"/>
<use href="#vl" x="1592" y="507" width="14" height="14"/><use href="#scn" x="1592" y="535" width="14" height="14"/>
<circle cx="1599" cy="570" r="6.300" fill="#2a2424" stroke="#9a4a52" stroke-width="1.100"/><path d="M1595 566L1600 565L1602 569L1598 572ZM1601 572L1604 573L1600 576Z" fill="#9a4a52"/><path d="M1592 576L1606 564" stroke="#9a4a52" stroke-width="1"/>
<path d="M1593 600H1606V603H1593ZM1594 604H1605V612H1594ZM1598 606H1601" fill="none" stroke="#e0e0e0" stroke-width="1.200"/>
<path d="M1592 639V635H1596M1602 635H1606V639M1606 645V649H1602M1596 649H1592V645" fill="none" stroke="#8e643c" stroke-width="1"/><rect x="1595" y="638" width="8" height="8" fill="#c4884e"/>
<path d="M1604 664Q1598 665 1598 670L1593 675L1596 677L1601 672Q1606 672 1606 667L1603 669L1601 667Z" fill="#6d9eff"/>
<circle cx="1594" cy="693" r="2.300" fill="#5c80c4"/><path d="M1594 693H1605M1594 693V703M1594 693L1604 703" stroke="#4a6aa8"/><circle cx="1605" cy="693" r="1.400" fill="#4a6aa8"/><circle cx="1594" cy="703" r="1.400" fill="#4a6aa8"/><circle cx="1604" cy="703" r="1.700" fill="#4a6aa8"/>
<circle cx="1599" cy="726" r="3" fill="#5c86d4"/><path d="M1604 732A7 7 0 1 1 1602 720" fill="none" stroke="#4a6aa8" stroke-width="1.100"/><circle cx="1604" cy="721" r="1.900" fill="#5a80c8"/>
<path d="M1593 754Q1598 745 1606 747Q1607 755 1599 759Q1593 760 1593 754Z" fill="none" stroke="#5a80c8" stroke-width="1.100"/><circle cx="1598" cy="755" r="2.800" fill="none" stroke="#5a80c8"/>
<path d="M1594 777H1604L1599 787Z" fill="none" stroke="#10b585" stroke-width="1.100"/><g fill="#1d1d1d" stroke="#10b585"><rect x="1592.500" y="775.500" width="3" height="3"/><rect x="1603" y="775.500" width="3" height="3"/><rect x="1597.500" y="785.500" width="3" height="3"/></g>
<circle cx="1599" cy="810" r="6.300" fill="#a04f59" stroke="#a04f59" stroke-width="1.100"/><path d="M1599 810V804A6 6 0 0 1 1605 810ZM1599 810V816A6 6 0 0 1 1593 810Z" fill="#241f20"/>
</svg>

<!-- Timeline -->
<div class="b" style="left:0;top:982px;width:1581px;height:75px;background:#232323;border-radius:5px"></div>
<div class="b" style="left:0;top:982px;width:1581px;height:25px;background:#303030;border-radius:5px 5px 0 0"></div>
<div class="b" style="left:0;top:1030px;width:1581px;height:27px;background-color:#242424;background-image:linear-gradient(90deg,#1a1a1a 0 1px,transparent 1px),linear-gradient(90deg,#1f1f1f 0 1px,transparent 1px);background-size:58.94px 100%,29.47px 100%;background-position:49px 0,49px 0"></div>
<div class="b" style="left:49px;top:1030px;width:1474px;height:27px;background-color:#2f2f2f;background-image:linear-gradient(90deg,#151515 0 1px,transparent 1px),linear-gradient(90deg,#262626 0 1px,transparent 1px);background-size:58.94px 100%,29.47px 100%"></div>
<div class="b" style="left:1px;top:1046px;width:1579px;height:9px;background:#4f4f4f;border-radius:4px"></div>
<div class="b" style="left:5px;top:1047px;width:7px;height:7px;background:#333;border-radius:50%"></div>
<div class="b" style="left:1568px;top:1047px;width:7px;height:7px;background:#333;border-radius:50%"></div>
<div class="btn" style="left:5px;top:986px;width:31px;height:18px;background:#2a2a2a"></div>
<div class="btn" style="left:42px;top:986px;width:70px;height:18px;background:#2a2a2a;border-radius:4px 0 0 4px"></div>
<div class="btn" style="left:112px;top:986px;width:61px;height:18px;background:#2a2a2a;border-radius:0 4px 4px 0"></div>
<div class="t" style="left:49px;top:987px;color:#d8d8d8">Playback</div>
<div class="t" style="left:120px;top:987px;color:#d8d8d8">Keying</div>
<div class="t" style="left:184px;top:987px;color:#d8d8d8">View</div>
<div class="t" style="left:224px;top:987px;color:#d8d8d8">Marker</div>
<div class="b" style="left:697px;top:986px;width:38px;height:18px;background:#3c3c3c;border-radius:4px"></div>
<div class="b" style="left:697px;top:986px;width:19px;height:18px;background:#545454;border-radius:4px 0 0 4px"></div>
<div class="b" style="left:742px;top:986px;width:118px;height:18px;background:#545454;border-radius:4px"></div>
<div class="b" style="left:1301px;top:986px;width:73px;height:18px;background:#545454;border-radius:4px"></div>
<div class="t" style="left:1301px;top:987px;width:71px;text-align:center;color:#e0e0e0">109</div>
<div class="b" style="left:1381px;top:986px;width:194px;height:18px;background:#545454;border-radius:4px"></div>
<div class="b" style="left:1381px;top:986px;width:19px;height:18px;background:#3c3c3c;border-radius:4px 0 0 4px"></div>
<div class="b" style="left:1488px;top:986px;width:1px;height:18px;background:#3a3a3a"></div>
<div class="t" style="left:1415px;top:987px;color:#e0e0e0">Start</div>
<div class="t" style="left:1468px;top:987px;color:#e0e0e0">1</div>
<div class="t" style="left:1504px;top:987px;color:#e0e0e0">End</div>
<div class="t" style="left:1541px;top:987px;color:#e0e0e0">250</div>
<svg width="1915" height="1079" viewBox="0 0 1915 1079" style="left:0;top:0">
<circle cx="17" cy="995" r="6.500" fill="#e6e6e6"/><path d="M19 989L14 995L19 1001" stroke="#2a2a2a" stroke-width="2" fill="none"/><use href="#chev" x="26" y="991" width="8" height="8"/>
<use href="#chev" x="102" y="991" width="8" height="8"/><use href="#chev" x="163" y="991" width="8" height="8"/>
<circle cx="706" cy="995" r="5" fill="none" stroke="#b0b0b0" stroke-width="1.100"/><use href="#chev" x="721" y="991" width="8" height="8" opacity=".35"/>
<g fill="#e6e6e6"><rect x="747" y="989" width="1.800" height="12"/><path d="M756 989L750 995L756 1001ZM771 989L766 995L771 1001L776 995ZM778 989V1001L773 995Z"/><path d="M796 988L786 995L796 1002Z"/><path d="M806 988L816 995L806 1002Z"/><path d="M831 989L826 995L831 1001L836 995ZM824 989L829 995L824 1001Z"/><path d="M846 989L852 995L846 1001Z"/><rect x="853" y="989" width="1.800" height="12"/></g>
<circle cx="1390" cy="996" r="5.500" fill="none" stroke="#e0e0e0" stroke-width="1.100"/><path d="M1390 996V992M1387 988H1393" stroke="#e0e0e0" stroke-width="1.200"/>
<path d="M1580 1022L1577 1025L1580 1028" stroke="#a0a0a0" fill="none"/>
<path d="M691.500 1024V1057" stroke="#4772b3" stroke-width="1.500"/>
<rect x="678" y="1010" width="29" height="17" rx="4" fill="#4772b3"/>
<text x="692.500" y="1022.500" font-family="Liberation Sans" font-size="11.700" fill="#fff" text-anchor="middle">109</text>
</svg>
<!-- ruler labels -->
<div class="t" style="left:40px;top:1010px;width:20px;text-align:center;color:#b0b0b0">0</div>
<div class="t" style="left:93px;top:1010px;width:30px;text-align:center;color:#b0b0b0">10</div>
<div class="t" style="left:152px;top:1010px;width:30px;text-align:center;color:#b0b0b0">20</div>
<div class="t" style="left:211px;top:1010px;width:30px;text-align:center;color:#b0b0b0">30</div>
<div class="t" style="left:270px;top:1010px;width:30px;text-align:center;color:#b0b0b0">40</div>
<div class="t" style="left:329px;top:1010px;width:30px;text-align:center;color:#b0b0b0">50</div>
<div class="t" style="left:388px;top:1010px;width:30px;text-align:center;color:#b0b0b0">60</div>
<div class="t" style="left:447px;top:1010px;width:30px;text-align:center;color:#b0b0b0">70</div>
<div class="t" style="left:505px;top:1010px;width:30px;text-align:center;color:#b0b0b0">80</div>
<div class="t" style="left:564px;top:1010px;width:30px;text-align:center;color:#b0b0b0">90</div>
<div class="t" style="left:623px;top:1010px;width:30px;text-align:center;color:#b0b0b0">100</div>
<div class="t" style="left:742px;top:1010px;width:30px;text-align:center;color:#b0b0b0">120</div>
<div class="t" style="left:801px;top:1010px;width:30px;text-align:center;color:#b0b0b0">130</div>
<div class="t" style="left:860px;top:1010px;width:30px;text-align:center;color:#b0b0b0">140</div>
<div class="t" style="left:918px;top:1010px;width:30px;text-align:center;color:#b0b0b0">150</div>
<div class="t" style="left:977px;top:1010px;width:30px;text-align:center;color:#b0b0b0">160</div>
<div class="t" style="left:1036px;top:1010px;width:30px;text-align:center;color:#b0b0b0">170</div>
<div class="t" style="left:1095px;top:1010px;width:30px;text-align:center;color:#b0b0b0">180</div>
<div class="t" style="left:1154px;top:1010px;width:30px;text-align:center;color:#b0b0b0">190</div>
<div class="t" style="left:1213px;top:1010px;width:30px;text-align:center;color:#b0b0b0">200</div>
<div class="t" style="left:1272px;top:1010px;width:30px;text-align:center;color:#b0b0b0">210</div>
<div class="t" style="left:1331px;top:1010px;width:30px;text-align:center;color:#b0b0b0">220</div>
<div class="t" style="left:1390px;top:1010px;width:30px;text-align:center;color:#b0b0b0">230</div>
<div class="t" style="left:1449px;top:1010px;width:30px;text-align:center;color:#b0b0b0">240</div>
<div class="t" style="left:1508px;top:1010px;width:30px;text-align:center;color:#b0b0b0">250</div>

<!-- Status bar -->
<div class="b" style="left:0;top:1057px;width:1915px;height:22px;background:#181818"></div>
<svg width="200" height="22" viewBox="0 0 200 22" style="left:0;top:1057px">
<g fill="none" stroke="#a8a8a8"><rect x="7" y="4" width="9" height="14" rx="3.500"/><rect x="64" y="4" width="9" height="14" rx="3.500"/><rect x="154" y="4" width="9" height="14" rx="3.500"/></g>
<path d="M7.500 10V7Q7.500 4.500 11 4.500V10Z" fill="#a8a8a8"/><rect x="67" y="6" width="3" height="5" fill="#a8a8a8"/><path d="M159 10V4.500Q162.500 4.500 162.500 7V10Z" fill="#a8a8a8"/>
</svg>
<div class="t" style="left:22px;top:1061px;color:#9a9a9a">Select</div>
<div class="t" style="left:80px;top:1061px;color:#9a9a9a">Rotate View</div>
<div class="t" style="left:169px;top:1061px;color:#9a9a9a">Options</div>
<div class="t" style="right:11px;top:1061px;color:#9a9a9a;font-size:11.500px;letter-spacing:.29px">Collection 2 | Interior | Verts:38,149 | Faces:34,360 | Tris:68,286 | Objects:1/108 | 4.4.1</div>
</body></html>
